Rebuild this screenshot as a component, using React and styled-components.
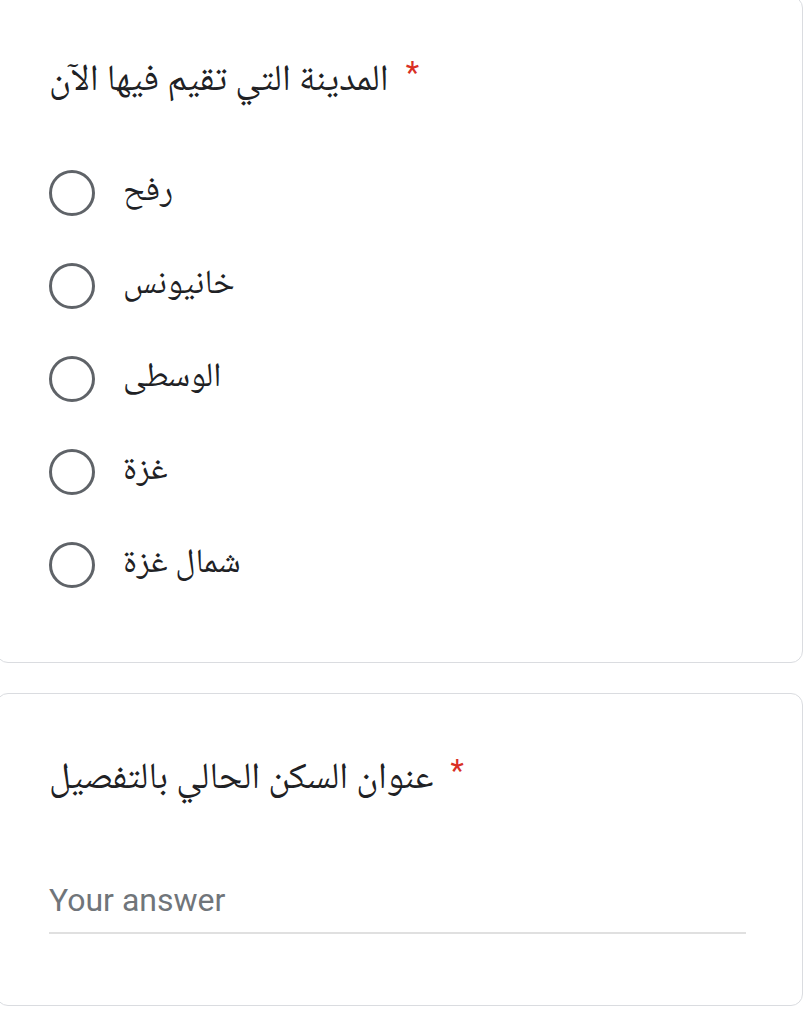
import React from 'react'
import styled, { createGlobalStyle } from 'styled-components'

const GlobalStyle = createGlobalStyle`
  html, body {
    margin: 0;
    padding: 0;
    background: #ffffff;
  }
  body {
    font-family: "Noto Naskh Arabic", "Noto Sans Arabic", "DejaVu Sans", Roboto, sans-serif;
    color: #202124;
    overflow: hidden;
  }
`

const Page = styled.div`
  display: flex;
  flex-direction: column;
  gap: 30px;
  margin: -4px 0 0 -4px;
  width: 807px;
`

const Card = styled.div`
  box-sizing: border-box;
  border: 1px solid #dadce0;
  border-radius: 12px;
  background: #fff;
  height: ${p => p.h}px;
  padding: ${p => p.pad};
`

const Title = styled.div`
  font-size: 37px;
  line-height: 50px;
  color: #202124;
  white-space: nowrap;
`

const Star = styled.span`
  color: #d93025;
  font-family: Roboto, sans-serif;
  font-size: 31px;
  margin-left: 17px;
  vertical-align: 7px;
`

const Options = styled.div`
  display: flex;
  flex-direction: column;
  gap: 47px;
  margin-top: 63px;
`

const Option = styled.label`
  display: flex;
  align-items: center;
  gap: 28px;
  height: 46px;
`

const Radio = styled.span`
  box-sizing: border-box;
  width: 46px;
  height: 46px;
  border-radius: 50%;
  border: 3.5px solid #5f6368;
  flex: none;
`

const OptionText = styled.span`
  font-size: 34px;
  line-height: 46px;
  color: #202124;
`

const Answer = styled.div`
  margin-top: 75px;
  width: 697px;
  border-bottom: 2px solid #e0e0e0;
  padding-bottom: 12px;
  font-family: Roboto, "Liberation Sans", sans-serif;
  font-size: 32px;
  line-height: 40px;
  color: #70757a;
`

const cities = ['رفح', 'خانيونس', 'الوسطى', 'غزة', 'شمال غزة']

export default function App() {
  return (
    <>
      <GlobalStyle />
      <Page>
        <Card h={667} pad="51px 0 0 52px">
          <Title>
            المدينة التي تقيم فيها الآن<Star>*</Star>
          </Title>
          <Options>
            {cities.map(c => (
              <Option key={c}>
                <Radio />
                <OptionText>{c}</OptionText>
              </Option>
            ))}
          </Options>
        </Card>
        <Card h={313} pad="52px 0 0 52px">
          <Title>
            عنوان السكن الحالي بالتفصيل<Star>*</Star>
          </Title>
          <Answer>Your answer</Answer>
        </Card>
      </Page>
    </>
  )
}
